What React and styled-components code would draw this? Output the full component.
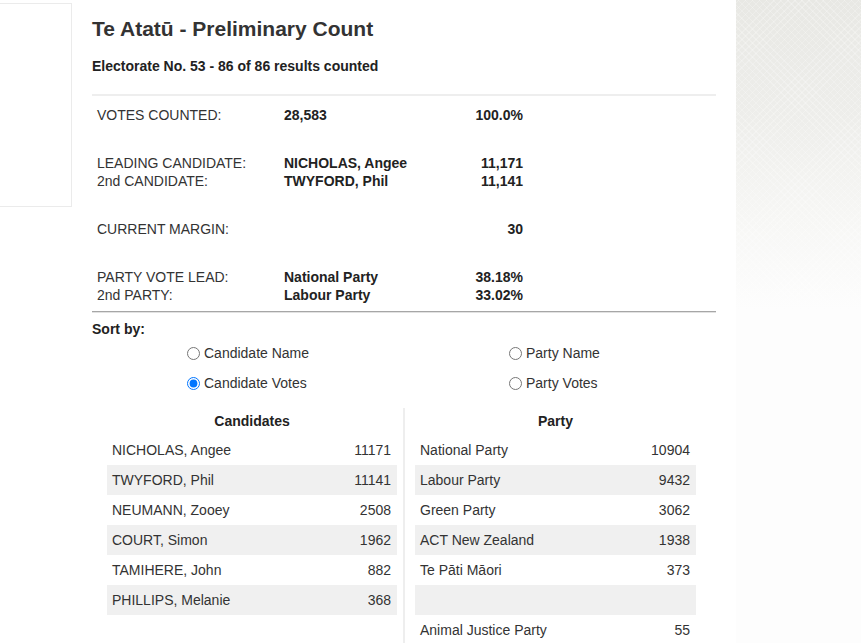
import React from 'react';
import styled, {createGlobalStyle} from 'styled-components';

const GlobalStyle = createGlobalStyle`
  html, body {
    margin: 0;
    padding: 0;
    background: #fdfdfd;
  }
  body {
    font-family: "Liberation Sans", Arial, Helvetica, sans-serif;
    font-size: 14px;
    color: #333;
  }
`;

const Page = styled.div`
  display: flex;
  min-height: 643px;
  overflow: hidden;
`;

const Main = styled.div`
  display: flex;
  flex: 0 0 736px;
  background: #fff;
`;

const Backdrop = styled.div`
  flex: 1;
  background:
    repeating-linear-gradient(45deg, rgba(255, 255, 255, 0.22) 0 1px, transparent 1px 5px),
    repeating-linear-gradient(-45deg, rgba(255, 255, 255, 0.22) 0 1px, transparent 1px 5px),
    linear-gradient(#e8e8e4 0, #eeeeeb 120px, #f7f7f5 220px, #fdfdfd 310px, #fdfdfd 100%);
  background-size: 100% 310px, 100% 310px, 100% 100%;
  background-repeat: no-repeat;
`;

const SideBox = styled.div`
  flex: 0 0 71px;
  height: 202px;
  margin-top: 3px;
  border: 1px solid #ebebeb;
  border-left: none;
`;

const Content = styled.div`
  width: 624px;
  margin-left: 20px;
  padding-top: 17px;
`;

const Title = styled.h1`
  margin: 0;
  font-size: 21px;
  line-height: 24px;
  font-weight: bold;
  color: #333;
`;

const Subtitle = styled.h4`
  margin: 17px 0 0;
  font-size: 14px;
  line-height: 16px;
  font-weight: bold;
  color: #222;
`;

const Summary = styled.div`
  margin-top: 20px;
  padding: 10px 0 7px;
  border-top: 2px solid #eee;
  border-bottom: 1px solid #a6a6a6;
  box-shadow: 0 1px 0 #e2e2e2;
`;

const Group = styled.div`
  display: grid;
  grid-template-columns: 192px 170px 69px;
  line-height: 18px;
  margin-bottom: 30px;

  &:last-child {
    margin-bottom: 0;
  }
`;

const Label = styled.div`
  padding-left: 5px;
  color: #333;
`;

const Strong = styled.div`
  font-weight: bold;
  color: #222;
  text-align: ${(p) => (p.$right ? 'right' : 'left')};
`;

const SortLabel = styled.div`
  margin-top: 8px;
  font-weight: bold;
  line-height: 18px;
  color: #222;
`;

const SortGrid = styled.div`
  display: grid;
  grid-template-columns: 322px 1fr;
  grid-auto-rows: 30px;
  padding-left: 90px;
`;

const Option = styled.label`
  display: flex;
  align-items: center;
  color: #333;

  input {
    width: 13px;
    height: 13px;
    margin: 0 4px 0 5px;
  }
`;

const Lists = styled.div`
  display: grid;
  grid-template-columns: 311px 1fr;
  margin-top: 10px;
`;

const Panel = styled.div`
  padding: ${(p) => (p.$divided ? '0 20px 0 10px' : '0 6px 0 15px')};
  border-left: ${(p) => (p.$divided ? '2px solid #eee' : 'none')};
`;

const ListHead = styled.div`
  font-weight: bold;
  text-align: center;
  line-height: 27px;
  color: #222;
`;

const ListRow = styled.div`
  display: flex;
  justify-content: space-between;
  height: 30px;
  line-height: 30px;
  padding: 0 6px 0 5px;
  background: ${(p) => (p.$odd ? '#f0f0f0' : 'transparent')};
`;

const candidates = [
  ['NICHOLAS, Angee', '11171'],
  ['TWYFORD, Phil', '11141'],
  ['NEUMANN, Zooey', '2508'],
  ['COURT, Simon', '1962'],
  ['TAMIHERE, John', '882'],
  ['PHILLIPS, Melanie', '368'],
];

const parties = [
  ['National Party', '10904'],
  ['Labour Party', '9432'],
  ['Green Party', '3062'],
  ['ACT New Zealand', '1938'],
  ['Te Pāti Māori', '373'],
  ['', ''],
  ['Animal Justice Party', '55'],
];

function List({title, rows}) {
  return (
    <>
      <ListHead>{title}</ListHead>
      {rows.map(([name, votes], i) => (
        <ListRow key={i} $odd={i % 2 === 1}>
          <span>{name}</span>
          <span>{votes}</span>
        </ListRow>
      ))}
    </>
  );
}

export default function App() {
  return (
    <Page>
      <GlobalStyle />
      <Main>
        <SideBox />
        <Content>
          <Title>Te Atatū - Preliminary Count</Title>
          <Subtitle>Electorate No. 53 - 86 of 86 results counted</Subtitle>

          <Summary>
            <Group>
              <Label>VOTES COUNTED:</Label>
              <Strong>28,583</Strong>
              <Strong $right>100.0%</Strong>
            </Group>
            <Group>
              <Label>LEADING CANDIDATE:</Label>
              <Strong>NICHOLAS, Angee</Strong>
              <Strong $right>11,171</Strong>
              <Label>2nd CANDIDATE:</Label>
              <Strong>TWYFORD, Phil</Strong>
              <Strong $right>11,141</Strong>
            </Group>
            <Group>
              <Label>CURRENT MARGIN:</Label>
              <Strong />
              <Strong $right>30</Strong>
            </Group>
            <Group>
              <Label>PARTY VOTE LEAD:</Label>
              <Strong>National Party</Strong>
              <Strong $right>38.18%</Strong>
              <Label>2nd PARTY:</Label>
              <Strong>Labour Party</Strong>
              <Strong $right>33.02%</Strong>
            </Group>
          </Summary>

          <SortLabel>Sort by:</SortLabel>
          <SortGrid>
            <Option>
              <input type="radio" name="sort" />
              Candidate Name
            </Option>
            <Option>
              <input type="radio" name="sort" />
              Party Name
            </Option>
            <Option>
              <input type="radio" name="sort" defaultChecked />
              Candidate Votes
            </Option>
            <Option>
              <input type="radio" name="sort" />
              Party Votes
            </Option>
          </SortGrid>

          <Lists>
            <Panel>
              <List title="Candidates" rows={candidates} />
            </Panel>
            <Panel $divided>
              <List title="Party" rows={parties} />
            </Panel>
          </Lists>
        </Content>
      </Main>
      <Backdrop />
    </Page>
  );
}
